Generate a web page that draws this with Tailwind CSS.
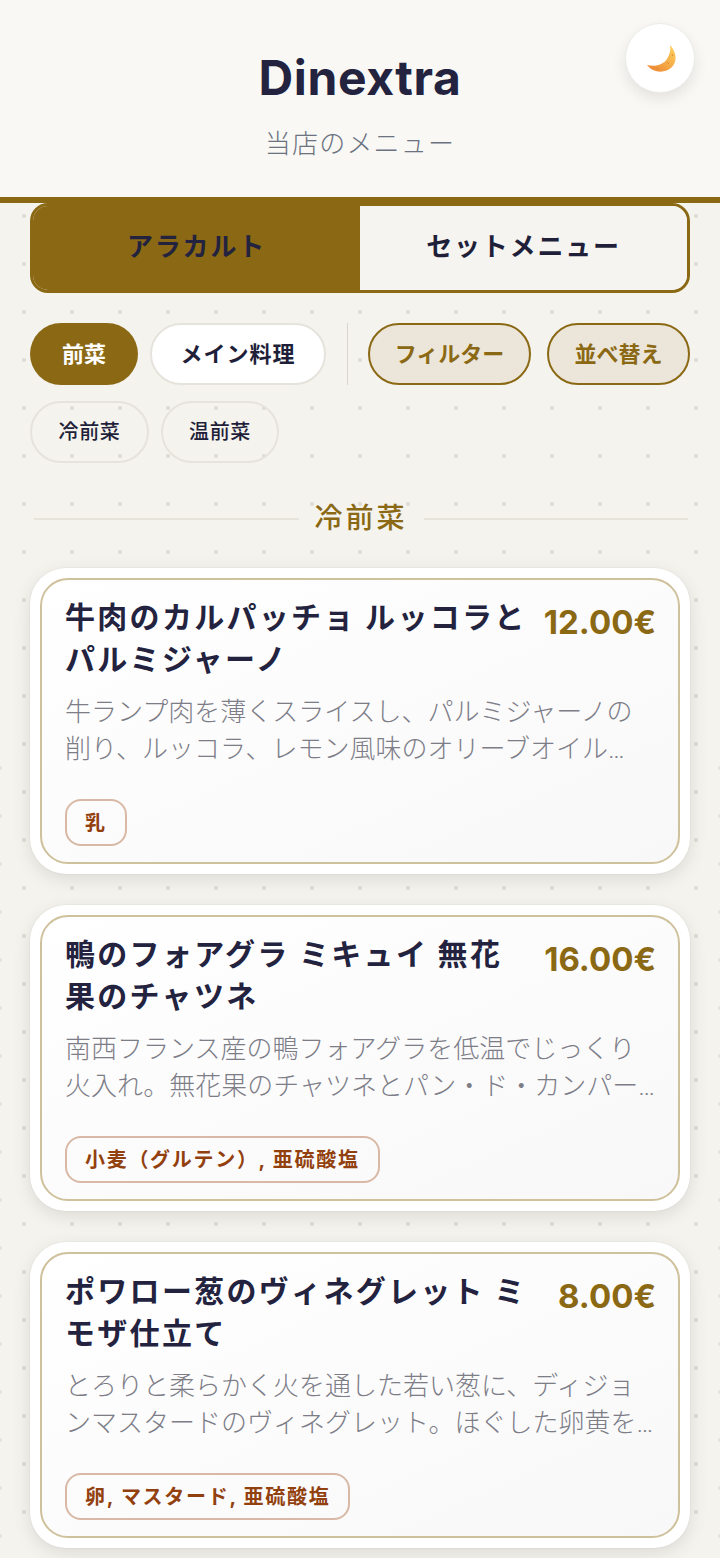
<!DOCTYPE html>
<html lang="ja">
<head>
  <meta charset="UTF-8">
  <meta name="viewport" content="width=device-width, initial-scale=1.0">
  <title>Dinextra</title>
  <script src="https://cdn.jsdelivr.net/npm/@tailwindcss/browser@4"></script>
</head>
<body class="relative bg-[#f4f3ed] bg-[radial-gradient(circle_at_center,#dddbd3_1.5px,transparent_2.5px)] bg-[size:48px_48px] text-[#1f1f3a] font-['Inter','Noto_Sans_CJK_JP',sans-serif] h-[1558px] overflow-hidden">
  <!-- faint half dots on the page edges -->
  <div class="absolute left-0 top-[744px] bottom-0 w-[3px] bg-[radial-gradient(circle_at_0_24px,#e4e2da_1.5px,transparent_2.5px)] bg-[size:48px_48px]"></div>
  <div class="absolute right-0 top-[744px] bottom-0 w-[3px] bg-[radial-gradient(circle_at_3px_24px,#e4e2da_1.5px,transparent_2.5px)] bg-[size:48px_48px]"></div>

  <!-- Header -->
  <header class="relative h-[203px] bg-[#f9f8f4] border-b-[6px] border-[#8b6914] flex flex-col items-center">
    <h1 class="mt-[48px] text-[48px] leading-[60px] font-bold tracking-[0.6px] text-[#23233f]">Dinextra</h1>
    <p class="mt-[16px] text-[26px] leading-[40px] font-light tracking-[1.2px] text-[#6b7280]">当店のメニュー</p>
    <button class="absolute left-[625px] top-[23px] w-[70px] h-[70px] rounded-full bg-white border border-[#ecece8] shadow-[0_6px_14px_rgba(0,0,0,0.09)] flex items-center justify-center">
      <svg width="36" height="36" viewBox="0 0 36 36">
        <defs>
          <linearGradient id="moon" x1="0.85" y1="0.1" x2="0.1" y2="0.85">
            <stop offset="0" stop-color="#fbcb5a"/>
            <stop offset="1" stop-color="#ee8a34"/>
          </linearGradient>
        </defs>
        <path d="M28 5C34 11 36 21 30 27C24 33 12 34 5 25C13 27 21 25 25 19C28 14 29 9 28 5Z" fill="url(#moon)"/>
        <path d="M14 28l3 1.500M25 22l2 2M30 14l1 2" stroke="#dd8a3c" stroke-width="1" fill="none"/>
      </svg>
    </button>
  </header>

  <main class="relative px-[30px]">
    <!-- Tabs -->
    <div class="flex h-[90px] rounded-[18px] border-[3px] border-[#8b6914] overflow-hidden text-[26px] font-bold tracking-[1.8px]">
      <div class="w-[327px] pb-[3px] bg-[#8b6914] flex items-center justify-center text-[#23233f]">アラカルト</div>
      <div class="flex-1 pb-[3px] bg-[#f5f4f0] flex items-center justify-center">セットメニュー</div>
    </div>

    <!-- Category chips -->
    <div class="mt-[30px] flex items-center h-[62px] text-[22px] font-semibold">
      <div class="w-[108px] h-[62px] rounded-full bg-[#8b6914] text-white flex items-center justify-center">前菜</div>
      <div class="ml-[12px] w-[176px] h-[62px] rounded-full bg-white border-2 border-[#e5e3dc] tracking-[1px] flex items-center justify-center">メイン料理</div>
      <div class="ml-[21px] w-px h-[62px] bg-[#d9d7cd]"></div>
      <div class="ml-[20px] w-[163px] h-[62px] rounded-full bg-[#ebe6d9] border-2 border-[#8b6914] text-[#8b6914] flex items-center justify-center">フィルター</div>
      <div class="ml-[16px] w-[143px] h-[62px] rounded-full bg-[#ebe6d9] border-2 border-[#8b6914] text-[#8b6914] flex items-center justify-center">並べ替え</div>
    </div>
    <div class="mt-[16px] flex gap-[12px] text-[20px] font-medium tracking-[0.7px]">
      <div class="w-[119px] h-[62px] rounded-full border-2 border-[#e5e3dc] flex items-center justify-center">冷前菜</div>
      <div class="w-[118px] h-[62px] rounded-full border-2 border-[#e5e3dc] flex items-center justify-center">温前菜</div>
    </div>

    <!-- Section title -->
    <div class="mt-[33px] ml-[4px] mr-[2px] flex items-center gap-[16px] h-[46px]">
      <div class="flex-1 h-[2px] bg-[#e6e4db]"></div>
      <h2 class="text-[28px] leading-[46px] font-medium tracking-[3px] text-[#8b6914] -translate-y-[1px]">冷前菜</h2>
      <div class="flex-1 h-[2px] bg-[#e6e4db]"></div>
    </div>

    <!-- Dish cards -->
    <div class="mt-[26px] flex flex-col gap-[31px]">
      <article class="h-[306px] rounded-[36px] bg-white p-[10px] shadow-[0_0_0_1px_rgba(0,0,0,0.025),0_5px_18px_rgba(0,0,0,0.1)]">
        <div class="h-full rounded-[28px] border-2 border-[#cfc19c] bg-linear-to-br from-white to-[#f8f8f8] pl-[23px] pr-[22px] pt-[16px] flex flex-col">
          <div class="flex justify-between gap-[14px]">
            <h3 class="text-[30px] leading-[42px] font-bold tracking-[2.3px] text-[#23233f]">牛肉のカルパッチョ ルッコラとパルミジャーノ</h3>
            <span class="mt-[5px] text-[33px] leading-[42px] font-bold text-[#8b6914] whitespace-nowrap">12.00€</span>
          </div>
          <p class="mt-[14px] text-[26px] leading-[37px] font-light font-['Roboto','Noto_Sans_CJK_JP',sans-serif] text-[#7d7d88] line-clamp-2">牛ランプ肉を薄くスライスし、パルミジャーノの削り、ルッコラ、レモン風味のオリーブオイル…</p>
          <div class="mt-auto mb-[16px] flex">
            <span class="h-[47px] px-[18px] rounded-[16px] border-2 border-[#d9b9a6] text-[20px] font-bold tracking-[1.7px] text-[#92400e] flex items-center">乳</span>
          </div>
        </div>
      </article>

      <article class="h-[306px] rounded-[36px] bg-white p-[10px] shadow-[0_0_0_1px_rgba(0,0,0,0.025),0_5px_18px_rgba(0,0,0,0.1)]">
        <div class="h-full rounded-[28px] border-2 border-[#cfc19c] bg-linear-to-br from-white to-[#f8f8f8] pl-[23px] pr-[22px] pt-[16px] flex flex-col">
          <div class="flex justify-between gap-[14px]">
            <h3 class="text-[30px] leading-[42px] font-bold tracking-[2.3px] text-[#23233f]">鴨のフォアグラ ミキュイ 無花果のチャツネ</h3>
            <span class="mt-[5px] text-[33px] leading-[42px] font-bold text-[#8b6914] whitespace-nowrap">16.00€</span>
          </div>
          <p class="mt-[14px] text-[26px] leading-[37px] font-light font-['Roboto','Noto_Sans_CJK_JP',sans-serif] text-[#7d7d88] line-clamp-2">南西フランス産の鴨フォアグラを低温でじっくり火入れ。無花果のチャツネとパン・ド・カンパー…</p>
          <div class="mt-auto mb-[16px] flex">
            <span class="h-[47px] px-[18px] rounded-[16px] border-2 border-[#d9b9a6] text-[20px] font-bold tracking-[1.7px] text-[#92400e] flex items-center">小麦（グルテン）, 亜硫酸塩</span>
          </div>
        </div>
      </article>

      <article class="h-[306px] rounded-[36px] bg-white p-[10px] shadow-[0_0_0_1px_rgba(0,0,0,0.025),0_5px_18px_rgba(0,0,0,0.1)]">
        <div class="h-full rounded-[28px] border-2 border-[#cfc19c] bg-linear-to-br from-white to-[#f8f8f8] pl-[23px] pr-[22px] pt-[16px] flex flex-col">
          <div class="flex justify-between gap-[14px]">
            <h3 class="text-[30px] leading-[42px] font-bold tracking-[2.3px] text-[#23233f]">ポワロー葱のヴィネグレット ミモザ仕立て</h3>
            <span class="mt-[5px] text-[33px] leading-[42px] font-bold text-[#8b6914] whitespace-nowrap">8.00€</span>
          </div>
          <p class="mt-[14px] text-[26px] leading-[37px] font-light font-['Roboto','Noto_Sans_CJK_JP',sans-serif] text-[#7d7d88] line-clamp-2">とろりと柔らかく火を通した若い葱に、ディジョンマスタードのヴィネグレット。ほぐした卵黄を…</p>
          <div class="mt-auto mb-[16px] flex">
            <span class="h-[47px] px-[18px] rounded-[16px] border-2 border-[#d9b9a6] text-[20px] font-bold tracking-[1.7px] text-[#92400e] flex items-center">卵, マスタード, 亜硫酸塩</span>
          </div>
        </div>
      </article>
    </div>
  </main>
</body>
</html>
